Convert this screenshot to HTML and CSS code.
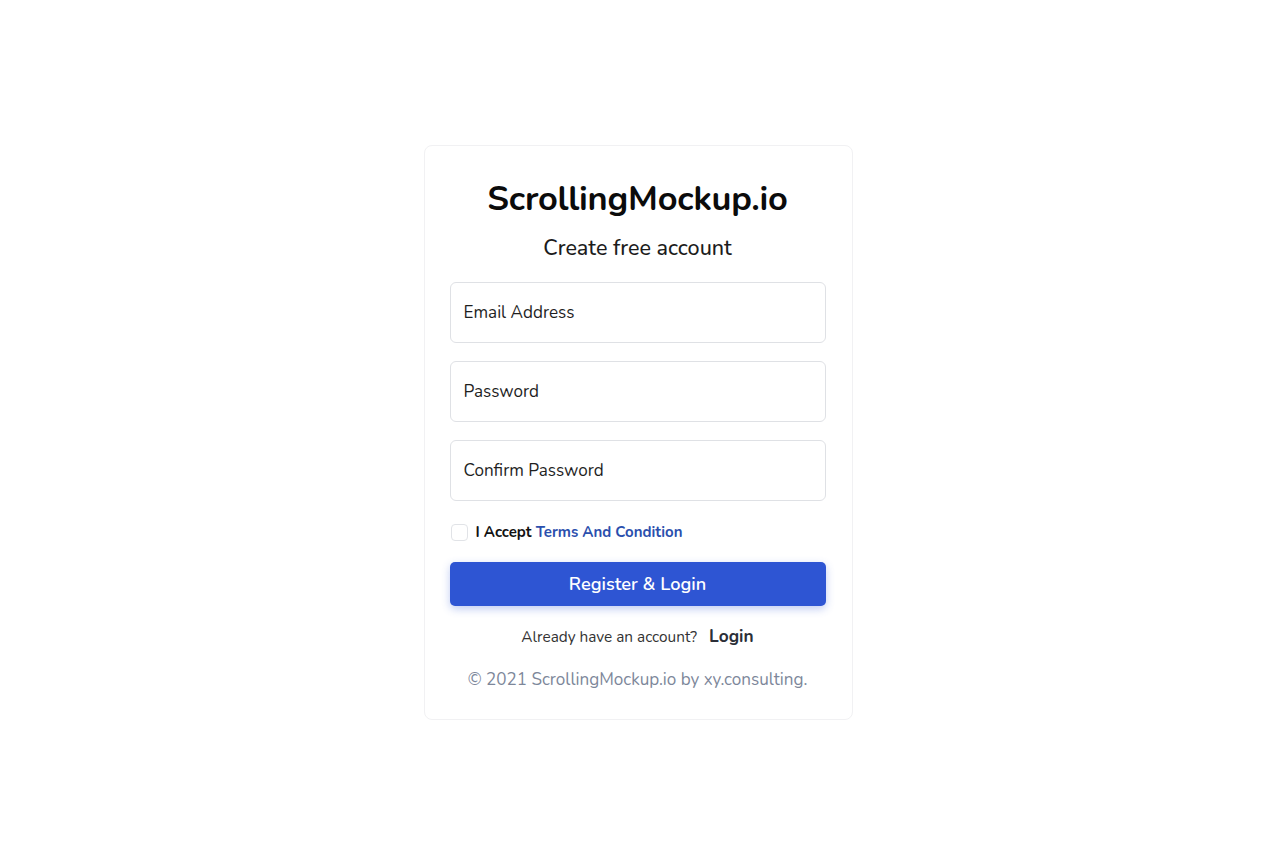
FILE: index.html
```html
<!DOCTYPE html>
<html lang="en">
<head>
<meta charset="utf-8">
<title>ScrollingMockup.io - Register</title>
<link rel="stylesheet" href="styles.css">
</head>
<body>
<main class="page">
  <section class="card">
    <h1 class="brand">ScrollingMockup.io</h1>
    <h2 class="subtitle">Create free account</h2>
    <form class="form">
      <input class="field" type="email" placeholder="Email Address">
      <input class="field" type="password" placeholder="Password">
      <input class="field" type="password" placeholder="Confirm Password">
      <label class="accept">
        <span class="box"></span>
        <span>I Accept <a class="terms" href="#">Terms And Condition</a></span>
      </label>
      <button class="btn" type="button">Register &amp; Login</button>
    </form>
    <p class="already">Already have an account? <a class="login" href="#">Login</a></p>
    <p class="copy">© 2021 ScrollingMockup.io by xy.consulting.</p>
  </section>
</main>
</body>
</html>
```

FILE: styles.css
```css
html, body {
  margin: 0;
  padding: 0;
  background: #ffffff;
}
body {
  font-family: "Nunito", "Open Sans", "Noto Sans", sans-serif;
  color: #1a1a1a;
}
.page {
  display: flex;
  justify-content: center;
  padding-top: 145px;
}
.card {
  box-sizing: border-box;
  width: 429px;
  margin-right: 4px;
  border: 1px solid #f1f1f3;
  border-radius: 8px;
  padding: 28px 26px 27px 25px;
  display: flex;
  flex-direction: column;
  align-items: stretch;
  text-align: center;
}
.brand {
  margin: 0;
  font-size: 34.4px;
  font-weight: 700;
  line-height: 50px;
  color: #0b0b0b;
  letter-spacing: -0.2px;
}
.subtitle {
  margin: 9px 0 0;
  font-size: 21.5px;
  font-weight: 500;
  line-height: 30px;
  color: #1c1c1c;
}
.form {
  margin-top: 19px;
  display: flex;
  flex-direction: column;
  gap: 18px;
}
.field {
  box-sizing: border-box;
  height: 61px;
  width: 100%;
  border: 1px solid #dfe1e5;
  border-radius: 6px;
  padding: 0 13px;
  font-family: inherit;
  font-size: 17.1px;
  color: #222;
  background: #fff;
  outline: none;
}
.field::placeholder {
  color: #1f1f1f;
  opacity: 1;
}
.accept {
  display: flex;
  align-items: center;
  gap: 8px;
  margin-top: 3px;
  height: 20px;
  font-size: 15px;
  font-weight: 700;
  color: #111;
  text-align: left;
}
.box {
  box-sizing: border-box;
  width: 17px;
  height: 17px;
  border: 1px solid #e1e3e7;
  border-radius: 4px;
  margin-left: 1px;
}
.terms {
  color: #2b4fad;
  text-decoration: none;
}
.btn {
  margin-top: 2px;
  height: 44px;
  width: 100%;
  border: none;
  border-radius: 5px;
  background: #2e55d3;
  color: #fff;
  font-family: inherit;
  font-size: 18.2px;
  font-weight: 600;
  box-shadow: 0 3px 8px rgba(46, 85, 211, 0.3);
  cursor: pointer;
}
.already {
  margin: 20px 0 0;
  font-size: 15.35px;
  line-height: 22px;
  color: #333;
}
.login {
  margin-left: 8px;
  font-size: 17.3px;
  font-weight: 700;
  color: #2b2f38;
  text-decoration: none;
}
.copy {
  margin: 20px 0 0;
  font-size: 17.1px;
  line-height: 24px;
  color: #7d879a;
}
```
